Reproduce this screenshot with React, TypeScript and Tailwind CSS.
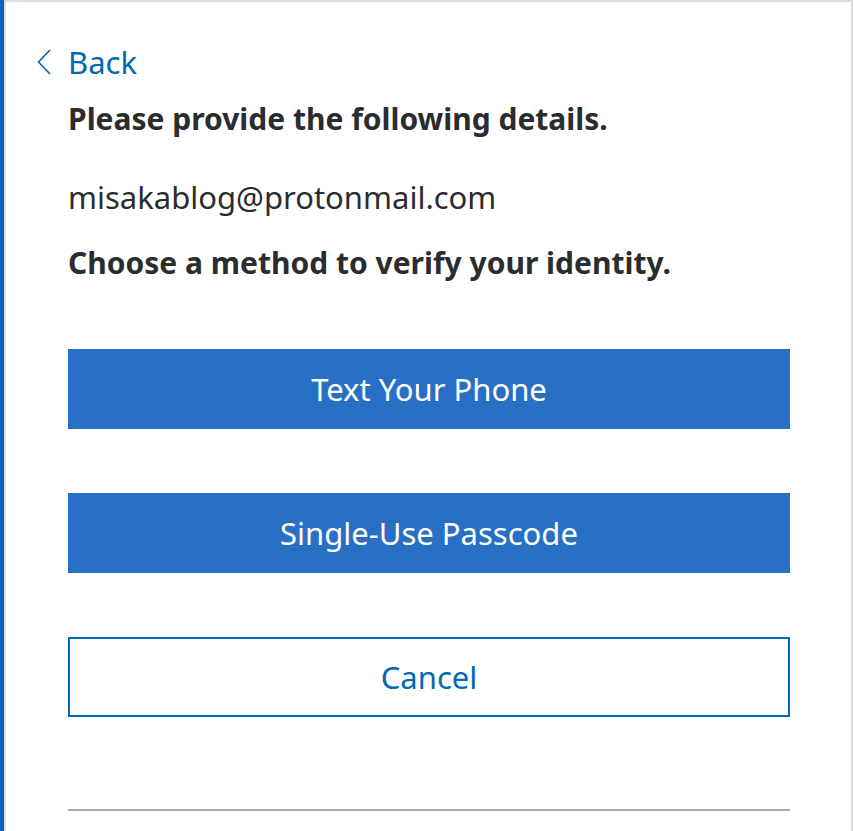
export default function App() {
  return (
    <div
      className="flex h-[831px] w-[853px] overflow-hidden bg-white"
      style={{ fontFamily: '"Noto Sans", "Open Sans", sans-serif' }}
    >
      {/* left accent strip */}
      <div className="w-[4px] flex-none bg-[#0e64b4]" />
      <div className="flex flex-auto flex-col border-l-2 border-r-2 border-t-2 border-[#dcdcdc]">
        <div className="flex flex-col pl-[31px] pr-[60px] pt-[40px]">
          <button className="flex items-center gap-[17px] text-[31px] leading-[40px] text-[#0068b5]">
            <svg width="14" height="26" viewBox="0 0 14 26" fill="none">
              <path d="M13 1 L1.5 13 L13 25" stroke="#0068b5" strokeWidth="1.6" />
            </svg>
            <span>Back</span>
          </button>
        </div>
        <div className="ml-[62px] flex w-[722px] flex-col">
          <p className="mt-[17px] text-[30px] font-bold leading-[40px] text-[#2b2c2e]">
            Please provide the following details.
          </p>
          <p className="mt-[38px] text-[31px] leading-[40px] text-[#2b2c2e]">
            misakablog@protonmail.com
          </p>
          <p className="mt-[26px] text-[30px] font-bold leading-[40px] text-[#2b2c2e]">
            Choose a method to verify your identity.
          </p>
          <div className="mt-[66px] flex flex-col gap-[64px]">
            <button className="h-[80px] w-full bg-[#286fc6] text-[31px] text-white">
              Text Your Phone
            </button>
            <button className="h-[80px] w-full bg-[#286fc6] text-[31px] text-white">
              Single-Use Passcode
            </button>
            <button className="h-[80px] w-full border-2 border-[#0068b5] bg-white text-[31px] text-[#0068b5]">
              Cancel
            </button>
          </div>
          <div className="mt-[92px] h-[2px] w-full bg-[#aaaaaa]" />
        </div>
      </div>
    </div>
  );
}
